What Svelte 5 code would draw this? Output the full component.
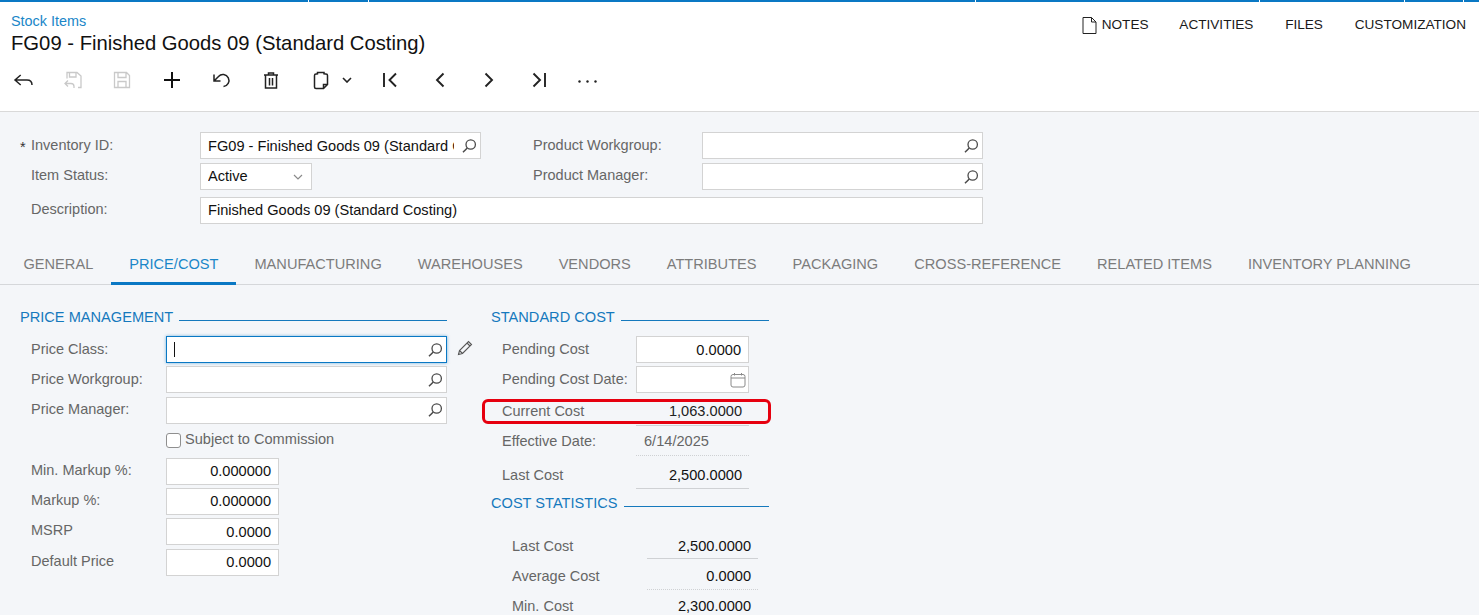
<script>
  const segments = [308, 59, 607, 283, 144, 58, 15];
  const navItems = ['ACTIVITIES', 'FILES', 'CUSTOMIZATION'];
  const tabs = ['GENERAL', 'PRICE/COST', 'MANUFACTURING', 'WAREHOUSES', 'VENDORS', 'ATTRIBUTES', 'PACKAGING', 'CROSS-REFERENCE', 'RELATED ITEMS', 'INVENTORY PLANNING'];
  const numbers = [
    ['Min. Markup %:', '0.000000'],
    ['Markup %:', '0.000000'],
    ['MSRP', '0.0000'],
    ['Default Price', '0.0000']
  ];
</script>

{#snippet search()}
  <svg class="search" width="16" height="16" viewBox="0 0 16 16" fill="none" stroke="#4a4a4a" stroke-width="1.3">
    <circle cx="9.7" cy="6.5" r="4.7" />
    <path d="M6.300 10 2 14.300" stroke-width="1.500" />
  </svg>
{/snippet}

<div class="page">
  <header class="head">
    <div class="topbar">
      {#each segments as w}<span class="seg" style="width:{w}px"></span>{/each}
    </div>
    <div class="headrow">
      <div class="titles">
        <div class="crumb">Stock Items</div>
        <h1>FG09 - Finished Goods 09 (Standard Costing)</h1>
      </div>
      <nav class="nav">
        <span class="notes">
          <svg width="15" height="17" viewBox="0 0 15 17" fill="none" stroke="#222" stroke-width="1">
            <path d="M1 .5H9.5L14 5V16.5H1Z" /><path d="M9.5 .5V5H14" />
          </svg>
          NOTES
        </span>
        {#each navItems as item}<span>{item}</span>{/each}
      </nav>
    </div>
    <div class="toolbar">
      <svg class="ic" viewBox="0 0 24 24"><path d="M9.7 7 4 12l5.700 5M4 12h12q5 0 5 5" /></svg>
      <svg class="ic off" viewBox="0 0 24 24"><path d="M6 10.500V4.500h10l4 3.500v11.500h-3M8.500 4.500v4.500h6.500V4.500M4 15.500h6q3 0 3 3v1.500M7 12.500l-3 3 3 3" /></svg>
      <svg class="ic off" viewBox="0 0 24 24"><path d="M4.500 4.500h12l3 3v12h-15ZM8 4.500v5h8v-5M8 19.500v-6h8v6" /></svg>
      <svg class="ic bold" viewBox="0 0 24 24"><path d="M12 4v16M4 12h16" /></svg>
      <svg class="ic" viewBox="0 0 24 24"><path d="M5 6.500V13h6.500M5 13l4.500-4.500a6 6 0 1 1 5 10" /></svg>
      <svg class="ic" viewBox="0 0 24 24"><path d="M5 7h14M9.500 7V5h5v2M6.500 7v13h11V7M10.500 10v7.500M13.500 10v7.500" /></svg>
      <span class="copy">
        <svg class="ic" viewBox="0 0 24 24"><path d="M8.500 6H7A1.500 1.500 0 0 0 5.500 7.500V19A1.500 1.500 0 0 0 7 20.500h7.500l4-4V7.500A1.500 1.500 0 0 0 17 6h-1.500M8.500 6.500V4.500H15v2M14.500 20.500v-4h4" /></svg>
        <svg class="chev" width="10" height="6" viewBox="0 0 10 6"><path d="M1 1l4 4 4-4" /></svg>
      </span>
      <svg class="ic nv" viewBox="0 0 24 24"><path d="M6 5v14M18 5.500 11.500 12l6.500 6.500" /></svg>
      <svg class="ic nv" viewBox="0 0 24 24"><path d="M15.500 5.500 9 12l6.500 6.500" /></svg>
      <svg class="ic nv" viewBox="0 0 24 24"><path d="M8.500 5.500 15 12l-6.500 6.500" /></svg>
      <svg class="ic nv" viewBox="0 0 24 24"><path d="M18 5v14M6.500 5.500 13 12l-6.500 6.500" /></svg>
      <svg class="ic" viewBox="0 0 24 24"><g class="dots"><circle cx="2.500" cy="13.500" r="1.200" /><circle cx="10.500" cy="13.500" r="1.200" /><circle cx="18.500" cy="13.500" r="1.200" /></g></svg>
    </div>
  </header>

  <section class="form">
    <div class="lab req"><i>*</i>Inventory ID:</div>
    <div class="box"><span class="txt">FG09 - Finished Goods 09 (Standard Costing)</span>{@render search()}</div>
    <div></div>
    <div class="lab">Product Workgroup:</div>
    <div class="box">{@render search()}</div>

    <div class="lab up">Item Status:</div>
    <div class="box short">
      <span class="txt flat">Active</span>
      <svg class="selchev" width="10" height="6" viewBox="0 0 10 6"><path d="M1 1l4 4 4-4" /></svg>
    </div>
    <div></div>
    <div class="lab up">Product Manager:</div>
    <div class="box">{@render search()}</div>

    <div class="lab up">Description:</div>
    <div class="box wide"><span class="txt flat">Finished Goods 09 (Standard Costing)</span></div>
  </section>

  <div class="tabs">
    {#each tabs as t, i}
      <div class="tab" class:active={i === 1}>{t}</div>
    {/each}
  </div>

  <main class="content">
    <div class="left">
      <div class="sect first"><span>PRICE MANAGEMENT</span><b></b></div>
      <div class="stack">
        <div class="row">
          <div class="lab">Price Class:</div>
          <div class="box focus"><span class="caret"></span>{@render search()}</div>
          <svg class="pencil" width="16" height="16" viewBox="0 0 16 16" fill="none" stroke="#555" stroke-width="1.1">
            <path d="M1.500 14.500 2.500 10.500 11.500 1.500 14.500 4.500 5.500 13.500ZM2.500 10.500 5.500 13.500M10 3l3 3" />
          </svg>
        </div>
        <div class="row"><div class="lab">Price Workgroup:</div><div class="box">{@render search()}</div></div>
        <div class="row"><div class="lab tight">Price Manager:</div><div class="box">{@render search()}</div></div>
        <div class="row">
          <div></div>
          <label class="check"><span class="cb"></span><span class="cbtext">Subject to Commission</span></label>
        </div>
        {#each numbers as [label, value]}
          <div class="row"><div class="lab tight">{label}</div><div class="box num small">{value}</div></div>
        {/each}
      </div>
    </div>

    <div class="right">
      <div class="sect first"><span>STANDARD COST</span><b></b></div>
      <div class="stack">
        <div class="row2"><div class="lab">Pending Cost</div><div class="box num small">0.0000</div></div>
        <div class="row2">
          <div class="lab">Pending Cost Date:</div>
          <div class="box small cal">
            <svg width="16" height="16" viewBox="0 0 16 16" fill="none" stroke="#8a8a8a" stroke-width="1">
              <rect x="1" y="2.500" width="14" height="12.500" rx="2" /><path d="M1 6h14M4.500 1v2.500M11.500 1v2.500" />
            </svg>
          </div>
        </div>
      </div>
      <div class="ro r1"><div class="lab">Current Cost</div><div class="val line">1,063.0000</div></div>
      <div class="ro r2"><div class="lab">Effective Date:</div><div class="val dot date">6/14/2025</div></div>
      <div class="ro r3"><div class="lab">Last Cost</div><div class="val line">2,500.0000</div></div>
      <div class="sect second"><span>COST STATISTICS</span><b></b></div>
      <div class="stats">
        <div class="ro r4"><div class="lab">Last Cost</div><div class="val line">2,500.0000</div></div>
        <div class="ro r4 r5"><div class="lab">Average Cost</div><div class="val dot">0.0000</div></div>
        <div class="ro r4 r6"><div class="lab">Min. Cost</div><div class="val">2,300.0000</div></div>
      </div>
      <div class="highlight"></div>
    </div>
  </main>
</div>

<style>
  :global(body) { margin: 0; }
  .page {
    height: 615px; overflow: hidden; background: #f4f6f9; color: #111;
    font-family: "Liberation Sans", Arial, sans-serif; font-size: 14.6px;
  }
  .head { height: 112px; box-sizing: border-box; background: #fff; border-bottom: 1px solid #d9d9d9; }
  .topbar { display: flex; gap: 1px; height: 2px; }
  .seg { display: block; height: 2px; background: #0a78c4; }
  .headrow { display: flex; justify-content: space-between; padding: 9px 13px 0 11px; }
  .crumb { font-size: 14.4px; line-height: 18px; padding-top: 1px; height: 17px; color: #1a86c8; }
  h1 { margin: 1px 0 0; font-size: 20.25px; font-weight: 400; line-height: 26px; color: #111; }
  .nav { display: flex; align-items: flex-start; gap: 31.8px; margin-top: 5px; font-size: 13.6px; line-height: 18px; color: #1a1a1a; }
  .notes { display: flex; align-items: center; gap: 5px; margin-right: -1px; height: 18px; }
  .toolbar { display: flex; align-items: center; gap: 25.6px; padding: 12px 0 0 11px; height: 24px; }
  .ic { width: 24px; height: 24px; flex: none; fill: none; stroke: #222; stroke-width: 1.500; }
  .ic.off { stroke: #c9c9c9; stroke-width: 1.300; }
  .ic.bold { stroke: #111; stroke-width: 2; }
  .ic.nv { stroke: #222; stroke-width: 1.900; }
  .dots { fill: #222; stroke: none; }
  .copy { display: flex; align-items: center; width: 44px; flex: none; }
  .chev { margin-left: 9px; fill: none; stroke: #222; stroke-width: 1.600; flex: none; }

  .form {
    display: grid; grid-template-columns: 180px 281px 41px 180px 281px;
    grid-template-rows: 31px 34px 27px; padding: 20px 0 0 20px;
  }
  .lab { color: #666; font-size: 14.5px; line-height: 26px; white-space: nowrap; }
  .lab.tight { line-height: 25px; }
  .form .lab { padding-left: 11px; }
  .form .lab.up { line-height: 24px; }
  .req { position: relative; }
  .req i { position: absolute; left: 0; top: 2px; font-style: normal; color: #333; }
  .box {
    display: flex; align-items: center; box-sizing: border-box; height: 27px; background: #fff;
    border: 1px solid #d3d3d3; padding: 0 3px 0 7px; min-width: 0;
  }
  .txt { flex: 1; overflow: hidden; white-space: nowrap; padding-top: 1px; box-sizing: border-box; height: 25px; line-height: 25px; min-width: 0; }
  .txt.flat { padding-top: 0; line-height: 24px; }
  .search { margin-left: auto; flex: none; }
  .box .txt + .search { margin-left: 7px; }
  .short { width: 112px; grid-column: 2; }
  .selchev { fill: none; stroke: #8a8a8a; stroke-width: 1.200; flex: none; margin-right: 5px; }
  .wide { grid-column: 2 / 6; width: 783px; }

  .tabs { display: flex; height: 41px; box-sizing: border-box; margin-top: 20px; padding-left: 5.5px; border-bottom: 1px solid #d5d7da; }
  .tab { height: 41px; box-sizing: border-box; padding: 11px 18px 0; font-size: 14.6px; line-height: 19px; color: #7c7c7c; white-space: nowrap; }
  .tab.active { color: #1a86c8; border-bottom: 3px solid #0a78c4; }

  .content { display: flex; padding: 22px 0 0 20px; }
  .left { width: 471px; flex: none; }
  .right { width: 278px; flex: none; position: relative; }
  .sect { display: flex; color: #1579bd; font-size: 14.6px; line-height: 21px; height: 19px; white-space: nowrap; }
  .sect b { display: block; flex: 1; height: 1px; background: #1579bd; margin: 13px 0 0 6px; }
  .left .sect { width: 427px; }
  .first { margin-bottom: 10.1px; }
  .second { margin-top: 5px; line-height: 19px; }
  .second b { margin-top: 12px; }
  .stack { display: flex; flex-direction: column; gap: 3.360px; }
  .row { display: grid; grid-template-columns: 135px 281px auto; padding-left: 11px; height: 27px; align-items: start; }
  .row .box.small { width: 113px; }
  .focus { border-color: #0a78c4; box-shadow: 0 0 3px rgba(10, 120, 196, .55); }
  .caret { display: block; width: 1px; height: 15px; background: #111; }
  .pencil { margin: 4px 0 0 10px; }
  .check { display: flex; align-items: center; height: 27px; color: #666; font-size: 14.6px; }
  .cbtext { line-height: 25px; height: 27px; }
  .cb { width: 15px; height: 15px; box-sizing: border-box; border: 1px solid #8f8f8f; border-radius: 3px; background: #fff; margin-right: 4px; }
  .row2 { display: grid; grid-template-columns: 134px 113px; padding-left: 11px; height: 27px; }
  .num { justify-content: flex-end; padding: 0 7px 0 0; }
  .cal { justify-content: flex-end; padding-right: 2px; }
  .ro { display: grid; grid-template-columns: 134px 113px; padding-left: 11px; box-sizing: border-box; }
  .ro .lab { line-height: 29px; }
  .val { text-align: right; box-sizing: border-box; padding-right: 7px; white-space: nowrap; }
  .line { border-bottom: 1px solid #cfd1d4; }
  .dot { border-bottom: 1px dotted #cfd1d4; }
  .date { text-align: left; padding-left: 8px; color: #666; font-size: 14.6px; }
  .r1 { height: 29px; margin-top: 3.500px; }
  .r1 .val { line-height: 29px; height: 29px; color: #222; }
  .r2 { height: 30px; }
  .r2 .val { line-height: 30px; height: 30px; }
  .r2 .lab { line-height: 30px; }
  .r3 { height: 33px; }
  .r3 .val { height: 33px; line-height: 39px; }
  .r3 .lab { line-height: 39px; }
  .stats { padding: 16px 0 0 10px; }
  .r4 { height: 30px; grid-template-columns: 135px 111px; }
  .r4 .val { height: 30px; line-height: 35px; }
  .r4 .lab { line-height: 35px; }
  .r4.r5 { height: 31px; }
  .r4.r5 .val { height: 31px; }
  .r4.r6 .val, .r4.r6 .lab { line-height: 33px; }
  .highlight {
    position: absolute; left: -9px; top: 92px; width: 289px; height: 25px; box-sizing: border-box;
    border: 3px solid #e6000f; border-radius: 6px;
  }
</style>
